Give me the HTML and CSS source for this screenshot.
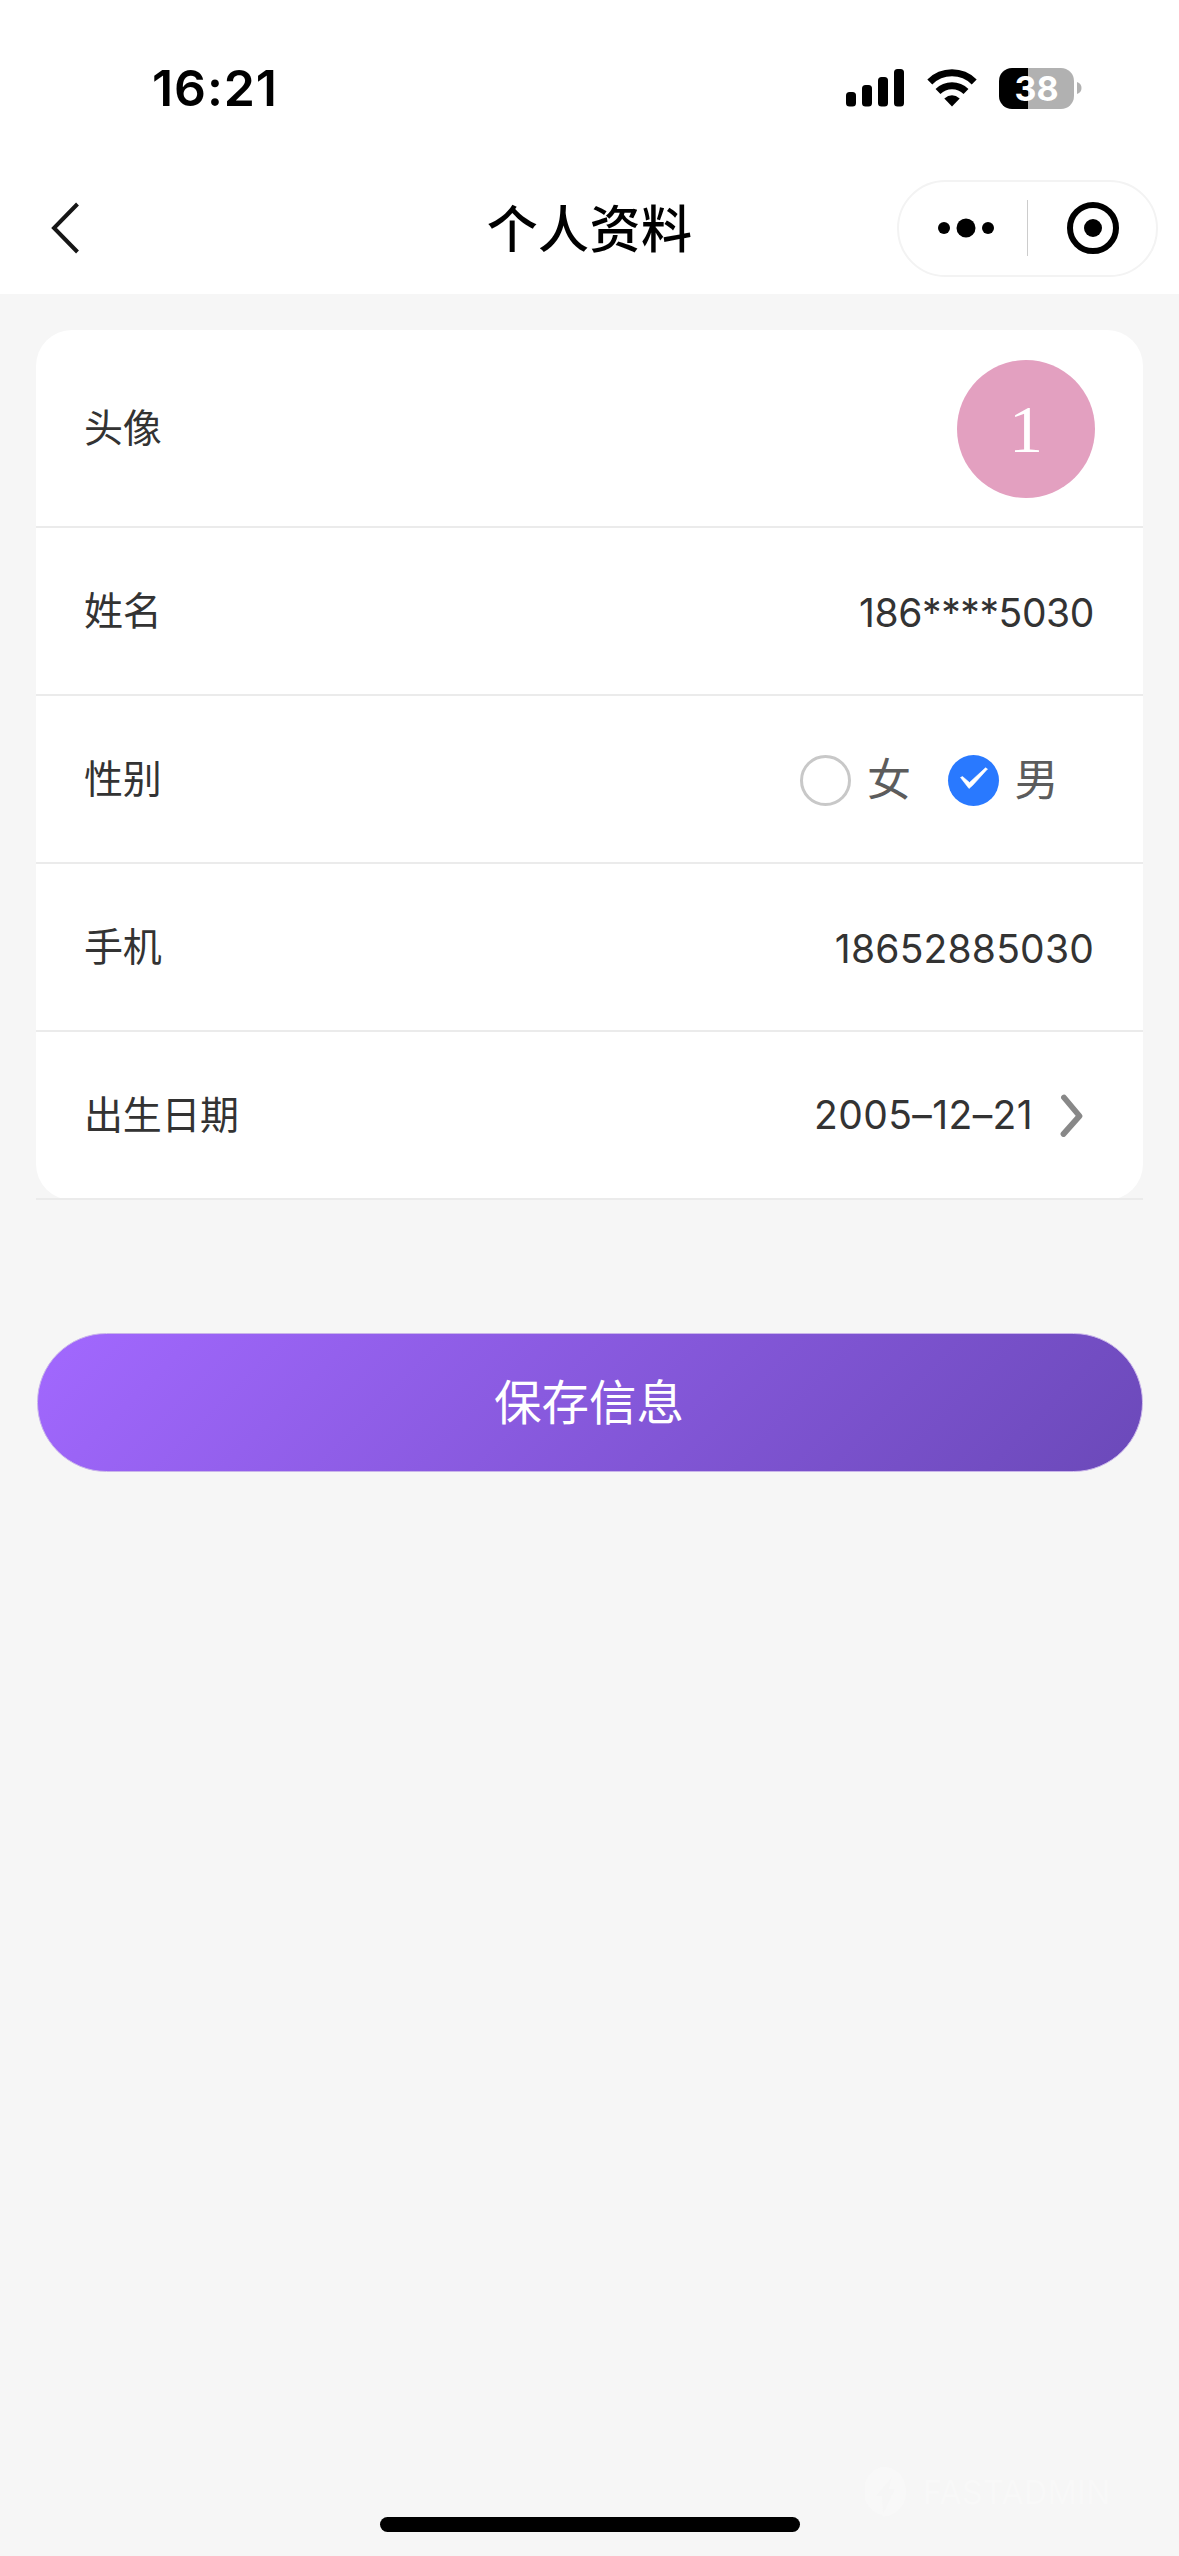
FILE: index.html
```html
<!DOCTYPE html>
<html lang="zh-CN">
<head>
<meta charset="utf-8">
<title>个人资料</title>
<link rel="stylesheet" href="styles.css">
</head>
<body>
<header class="header">
  <div class="status">
    <span class="time">16:21</span>
    <div class="status-icons">
      <svg class="signal" width="58" height="38" viewBox="0 0 58 38"><rect y="23" width="10" height="14.5" rx="3.5"/><rect x="16" y="16" width="10" height="21.5" rx="3.5"/><rect x="32" y="8" width="10" height="29.500" rx="3.500"/><rect x="48" y="0" width="10" height="37.500" rx="3.500"/></svg>
      <svg class="wifi" width="50" height="38" viewBox="0 0 50 38"><path d="M2.800 13A31.500 31.500 0 0 1 47.200 13M11 22.500A20 20 0 0 1 39 22.500" fill="none" stroke="#000" stroke-width="7"/><path d="M25 37.500L17.300 29.600Q25 23 32.700 29.600Z"/></svg>
      <div class="battery"><span class="level">38</span><svg width="5" height="12" viewBox="0 0 5 12"><path d="M0 0Q4.500 1.500 4.500 6T0 12Z" fill="#b1b1b1"/></svg></div>
    </div>
  </div>
  <nav class="nav">
    <svg class="back" width="30" height="52" viewBox="0 0 30 52"><path d="M27.500 2L4 26L27.500 50" fill="none" stroke="#161616" stroke-width="4"/></svg>
    <h1 class="title">个人资料</h1>
    <div class="capsule">
      <svg width="58" height="24" viewBox="0 0 58 24"><circle cx="7" cy="12" r="6"/><circle cx="29" cy="12" r="9.500"/><circle cx="51" cy="12" r="6"/></svg>
      <span class="divider"></span>
      <svg width="54" height="54" viewBox="0 0 54 54"><circle cx="27" cy="27" r="23" fill="none" stroke="#000" stroke-width="6"/><circle cx="27" cy="27" r="9"/></svg>
    </div>
  </nav>
</header>
<main class="content">
  <section class="card">
    <div class="row row-avatar"><span class="label">头像</span><span class="avatar">1</span></div>
    <div class="row"><span class="label">姓名</span><span class="value name">186****5030</span></div>
    <div class="row">
      <span class="label">性别</span>
      <div class="options">
        <span class="option"><i class="radio"></i><span class="option-text">女</span></span>
        <span class="option"><i class="radio checked"><svg width="51" height="51" viewBox="0 0 51 51"><path d="M12.500 22.500L21 33.500L24.500 30.500L39.500 14L37.500 12.800L21.500 27.500L14.500 21.500Z" fill="#fff" stroke="#fff" stroke-width=".6" stroke-linejoin="round"/></svg></i><span class="option-text">男</span></span>
      </div>
    </div>
    <div class="row"><span class="label">手机</span><span class="value phone">18652885030</span></div>
    <div class="row row-date"><span class="label">出生日期</span><span class="value date">2005–12–21</span><svg class="chevron" width="24" height="44" viewBox="0 0 24 44"><path d="M4 4.500L19.500 23L3.500 41" fill="none" stroke="#888" stroke-width="5.800" stroke-linecap="round" stroke-linejoin="round"/></svg></div>
  </section>
  <button class="save">保存信息</button>
</main>
<footer class="footer">
  <span class="home"></span>
  <div class="mark"><svg width="42" height="50" viewBox="0 0 42 50"><path d="M22 0A21 24 0 0 0 18 48L17 29H11L27 10L24 22H30L17 49A21 24 0 0 0 22 0Z" fill="#f8f8f8"/></svg><span>FASTADMIN</span></div>
</footer>
</body>
</html>
```
FILE: styles.css
```css
* { box-sizing: border-box; }
body {
  margin: 0;
  width: 1179px;
  height: 2556px;
  display: flex;
  flex-direction: column;
  background: #f6f6f6;
  color: #333;
  font-family: Inter, "Noto Sans CJK SC", sans-serif;
}
svg { display: block; flex: none; }
.header { height: 294px; background: #fff; color: #000; }
.status {
  height: 162px;
  padding: 14px 97px 0 152px;
  display: flex;
  align-items: center;
  justify-content: space-between;
}
.time { font-size: 50px; font-weight: 600; line-height: 60px; letter-spacing: 0.9px; }
.status-icons { display: flex; align-items: center; }
.signal { margin-right: 23px; }
.wifi { margin-right: 22px; }
.battery { display: flex; align-items: center; gap: 3px; }
.level {
  width: 75px;
  height: 41px;
  border-radius: 13px;
  background: linear-gradient(90deg, #000 29px, #b1b1b1 29px);
  color: #fff;
  font-size: 34px;
  font-weight: 700;
  line-height: 41px;
  text-align: center;
}
.nav {
  height: 132px;
  padding: 0 21px 0 50px;
  display: grid;
  grid-template-columns: 261px 1fr 261px;
  align-items: center;
}
.title { margin: 4px 0 0 -29px; text-align: center; font-size: 51px; font-weight: 500; line-height: 60px; letter-spacing: 0.4px; }
.capsule {
  height: 97px;
  padding: 0 36px 0 38px;
  display: flex;
  align-items: center;
  border: 2px solid #f3f3f3;
  border-radius: 49px;
}
.divider { width: 1px; height: 56px; margin: 0 38px 0 32px; background: #ccc; }
.content { flex: 1; padding: 36px 36px 0; }
.card { background: #fff; border-radius: 36px; }
.row {
  height: 168px;
  padding: 0 49px 0 48px;
  display: flex;
  align-items: center;
  justify-content: space-between;
  border-bottom: 2px solid #ebebeb;
}
.row-avatar { height: 198px; padding-right: 48px; }
.label { margin-bottom: 6px; font: 39px/58px "Noto Sans CJK SC", sans-serif; letter-spacing: -0.3px; }
.value { font-size: 39px; line-height: 48px; }
.name { padding-top: 3px; letter-spacing: -0.4px; }
.phone { padding-top: 3px; letter-spacing: 0.2px; }
.avatar {
  width: 138px;
  height: 138px;
  margin-top: 2px;
  border-radius: 50%;
  background: #e3a0c0;
  color: #fff;
  font: 68px/139px "Liberation Serif", serif;
  text-align: center;
}
.options { display: flex; gap: 37px; padding: 2px 36px 0 0; color: #5c5c5c; }
.option { display: flex; align-items: center; gap: 16px; font: 44px/60px "Noto Sans CJK SC", sans-serif; }
.option-text { margin-bottom: 6px; letter-spacing: -0.5px; }
.radio { width: 51px; height: 51px; border: 3px solid #c8c8c8; border-radius: 50%; }
.radio.checked { border: 0; background: #2979ff; }
.row-date { padding-right: 59px; }
.date { margin-left: auto; letter-spacing: 0.4px; }
.chevron { margin-left: 27px; }
.save {
  display: block;
  width: 1106px;
  height: 139px;
  margin: 133px 0 0 1px;
  padding: 0 2px 6px 0;
  border: 1px solid #c9b5ea;
  border-radius: 70px;
  background: linear-gradient(135deg, #a268ff, #6b49b9);
  color: #fff;
  font: 47.5px/131px "Noto Sans CJK SC", sans-serif;
}
.footer {
  height: 100px;
  padding: 11px 0 0 380px;
  display: flex;
  align-items: flex-start;
}
.home { width: 420px; height: 15px; margin-top: 50px; border-radius: 8px; background: #000; }
.mark { display: flex; align-items: center; gap: 16px; margin-left: 65px; color: #f8f8f8; font-size: 32px; letter-spacing: 0.5px; }
```
